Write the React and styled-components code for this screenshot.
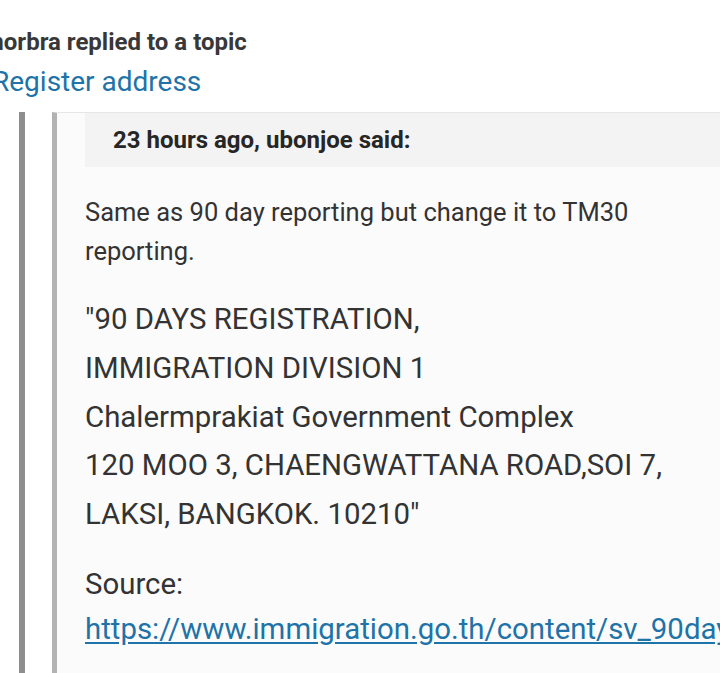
import React from 'react'
import styled, { createGlobalStyle } from 'styled-components'

const Global = createGlobalStyle`
  html, body {
    margin: 0;
    padding: 0;
    background: #ffffff;
    overflow: hidden;
  }
  body {
    font-family: Roboto, "Liberation Sans", Arial, sans-serif;
    color: #333333;
  }
`

const Page = styled.div`
  width: 720px;
  height: 673px;
  overflow: hidden;
  padding-top: 26px;
  box-sizing: border-box;
`

const Activity = styled.div`
  margin-left: -17px;
  font-size: 24px;
  font-weight: 700;
  color: #383838;
  line-height: 32px;
  white-space: nowrap;
`

const TopicLink = styled.a`
  display: block;
  margin-left: -8px;
  margin-top: 6px;
  font-size: 28px;
  line-height: 36px;
  color: #1e73a8;
  text-decoration: none;
  white-space: nowrap;
`

const Snippet = styled.div`
  margin-top: 12px;
  margin-left: 19px;
  border-left: 6px solid #8e8e8e;
  padding-left: 27px;
  height: 600px;
`

const Quote = styled.blockquote`
  margin: 0;
  border-left: 5px solid #b3b3b3;
  border-top: 1px solid #e6e6e6;
  background: #fbfbfb;
  height: 100%;
  padding-left: 28px;
`

const Citation = styled.div`
  background: #f3f3f3;
  height: 54px;
  display: flex;
  align-items: center;
  padding-left: 28px;
  font-size: 24px;
  font-weight: 700;
  color: #262626;
  white-space: nowrap;
`

const Body = styled.div`
  padding-top: 26px;
`

const Para = styled.p`
  margin: 0 0 ${p => p.gap || 24}px 0;
  font-size: ${p => p.size || 25.5}px;
  line-height: ${p => p.lh || 39}px;
  color: #333333;
  white-space: nowrap;
`

const Url = styled.a`
  color: #1e73a8;
  text-decoration: underline;
  text-underline-offset: 3px;
`

export default function App() {
  return (
    <Page>
      <Global />
      <Activity>morbra replied to a topic</Activity>
      <TopicLink href="#">Register address</TopicLink>
      <Snippet>
        <Quote>
          <Citation>23 hours ago, ubonjoe said:</Citation>
          <Body>
            <Para>
              Same as 90 day reporting but change it to TM30<br />
              reporting.
            </Para>
            <Para size={29.4} lh={48.8} gap={23}>
              "90 DAYS REGISTRATION,<br />
              IMMIGRATION DIVISION 1<br />
              Chalermprakiat Government Complex<br />
              120 MOO 3, CHAENGWATTANA ROAD,SOI 7,<br />
              LAKSI, BANGKOK. 10210"
            </Para>
            <Para size={29.4} lh={45}>
              Source:<br />
              <Url href="#">https://www.immigration.go.th/content/sv_90days</Url>
            </Para>
          </Body>
        </Quote>
      </Snippet>
    </Page>
  )
}
